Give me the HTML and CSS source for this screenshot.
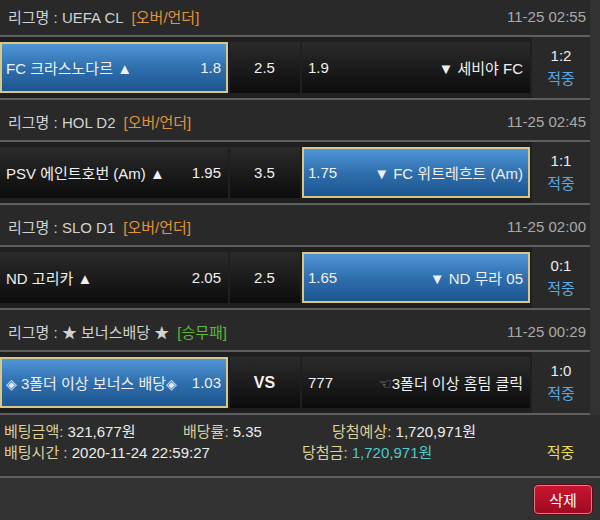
FILE: index.html
```html
<!DOCTYPE html>
<html lang="ko">
<head>
  <meta charset="UTF-8">
  <title>배팅내역</title>
  <link rel="stylesheet" href="styles.css">
</head>
<body>
  <div class="wrap">
    <div class="bet-list">
      <div class="league">
        <span class="lg-name">리그명 : UEFA CL</span>
        <span class="tag ou">[오버/언더]</span>
        <span class="date">11-25 02:55</span>
      </div>
      <div class="match">
        <div class="pick home on"><span>FC 크라스노다르 ▲</span><span>1.8</span></div>
        <div class="pick mid">2.5</div>
        <div class="pick away"><span>1.9</span><span>▼ 세비야 FC</span></div>
        <div class="score"><span>1:2</span><span class="hit">적중</span></div>
      </div>

      <div class="league">
        <span class="lg-name">리그명 : HOL D2</span>
        <span class="tag ou">[오버/언더]</span>
        <span class="date">11-25 02:45</span>
      </div>
      <div class="match">
        <div class="pick home"><span>PSV 에인트호번 (Am) ▲</span><span>1.95</span></div>
        <div class="pick mid">3.5</div>
        <div class="pick away on"><span>1.75</span><span>▼ FC 위트레흐트 (Am)</span></div>
        <div class="score"><span>1:1</span><span class="hit">적중</span></div>
      </div>

      <div class="league">
        <span class="lg-name">리그명 : SLO D1</span>
        <span class="tag ou">[오버/언더]</span>
        <span class="date">11-25 02:00</span>
      </div>
      <div class="match">
        <div class="pick home"><span>ND 고리카 ▲</span><span>2.05</span></div>
        <div class="pick mid">2.5</div>
        <div class="pick away on"><span>1.65</span><span>▼ ND 무라 05</span></div>
        <div class="score"><span>0:1</span><span class="hit">적중</span></div>
      </div>

      <div class="league">
        <span class="lg-name">리그명 : ★ 보너스배당 ★</span>
        <span class="tag wdl">[승무패]</span>
        <span class="date">11-25 00:29</span>
      </div>
      <div class="match">
        <div class="pick home on"><span><span class="sym">◈</span> 3폴더 이상 보너스 배당<span class="sym">◈</span></span><span>1.03</span></div>
        <div class="pick mid vs">VS</div>
        <div class="pick away"><span>777</span><span><span class="hand">☜</span>3폴더 이상 홈팀 클릭</span></div>
        <div class="score"><span>1:0</span><span class="hit">적중</span></div>
      </div>
    </div>

    <div class="summary">
      <div class="sum-line">
        <span class="c1"><em>베팅금액:</em> 321,677원</span>
        <span class="c2"><em>배당률:</em> 5.35</span>
        <span class="c3"><em>당첨예상:</em> 1,720,971원</span>
      </div>
      <div class="sum-line">
        <span class="c1 wide"><em>배팅시간 :</em> 2020-11-24 22:59:27</span>
        <span class="c2 wide"><em>당첨금:</em> <b class="win">1,720,971원</b></span>
        <span class="c3 result">적중</span>
      </div>
    </div>

    <div class="actions">
      <button class="btn-del">삭제</button>
    </div>
  </div>
</body>
</html>
```

FILE: styles.css
```css
* {
  margin: 0;
  padding: 0;
  box-sizing: border-box;
}

body {
  width: 600px;
  height: 520px;
  overflow: hidden;
  background: #323232;
  font-family: "Liberation Sans", "Noto Sans CJK KR", "DejaVu Sans", sans-serif;
  color: #ececec;
}

.wrap {
  margin-top: -5px;
}

.bet-list {
  width: 590px;
}

.league {
  display: flex;
  align-items: center;
  height: 42px;
  padding: 3px 4px 0 8px;
  background: #292929;
  border-bottom: 2px solid #5f5f5f;
  font-size: 15px;
  color: #d2d2d2;
}

.tag {
  margin-left: 8px;
}

.tag.ou {
  color: #e3933a;
}

.tag.wdl {
  color: #5cb83c;
}

.date {
  margin-left: auto;
  color: #a9a9a9;
}

.match {
  display: flex;
  gap: 2px;
  height: 63px;
  background: #1f1f1f;
  border-bottom: 2px solid #5f5f5f;
}

.pick {
  display: flex;
  align-items: center;
  justify-content: space-between;
  margin: 5px 0;
  padding: 0 7px 0 6px;
  background: linear-gradient(#2b2b2b, #0c0c0c);
  font-size: 15px;
  color: #f0f0f0;
}

.pick.home {
  width: 228px;
}

.pick.mid {
  width: 70px;
  justify-content: center;
}

.pick.away {
  width: 228px;
}

.pick.on {
  background: linear-gradient(#5096d7, #2f6fae 50%, #1d5690);
  border: 2px solid #d8c888;
  padding: 0 5px 0 4px;
}

.pick.vs {
  font-weight: bold;
  font-size: 16px;
}

.sym {
  font-family: "DejaVu Sans", sans-serif;
  font-size: 14px;
  color: #e6eef6;
}

.hand {
  font-family: "DejaVu Sans", sans-serif;
  font-size: 15px;
  color: #9a9a9a;
}

.score {
  flex: 1;
  display: flex;
  flex-direction: column;
  align-items: center;
  justify-content: center;
  gap: 3px;
  background: #292929;
  font-size: 15px;
  color: #ececec;
}

.score .hit {
  color: #5aa7e2;
}

.summary {
  height: 63px;
  padding: 5px 0 0 4px;
  border-bottom: 2px solid #5f5f5f;
  background: #2c2c2c;
  font-size: 15px;
}

.sum-line {
  display: flex;
  height: 21px;
  align-items: center;
}

.sum-line em {
  font-style: normal;
  color: #ddd09a;
}

.c1 {
  width: 179px;
}

.c2 {
  width: 149px;
}

.c1.wide {
  width: 298px;
}

.c2.wide {
  width: 229px;
}

.c3.result {
  width: 59px;
  text-align: center;
  color: #e8dc5c;
}

.win {
  font-weight: normal;
  color: #4fc9c9;
}

.actions {
  display: flex;
  justify-content: flex-end;
  padding: 7px 8px 0 0;
}

.btn-del {
  width: 58px;
  height: 29px;
  border: 1px solid #e2798a;
  border-radius: 4px;
  background: linear-gradient(#c81530, #a00a22);
  box-shadow: 0 0 0 1px #5a0a14;
  font-family: "Noto Sans CJK KR", sans-serif;
  font-size: 15px;
  color: #fff;
}
```
